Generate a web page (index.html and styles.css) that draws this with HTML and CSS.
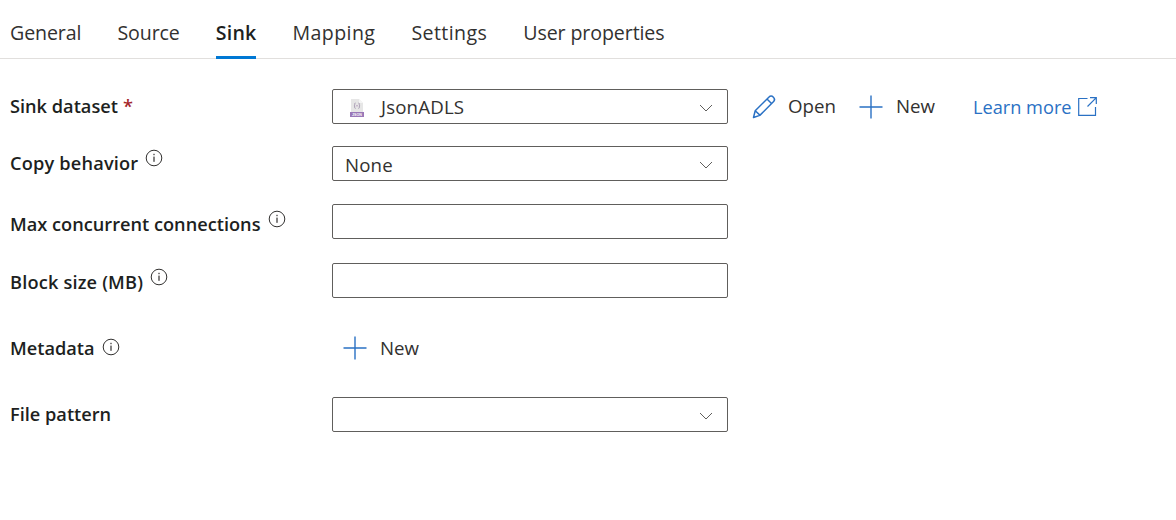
FILE: index.html
```html
<!DOCTYPE html>
<html lang="en">
<head>
<meta charset="utf-8">
<title>Sink</title>
<link rel="stylesheet" href="styles.css">
</head>
<body>
<nav class="tabs">
  <a class="tab">General</a>
  <a class="tab">Source</a>
  <a class="tab active">Sink</a>
  <a class="tab wide">Mapping</a>
  <a class="tab wide">Settings</a>
  <a class="tab">User properties</a>
</nav>
<main class="form">
  <div class="row row-dataset">
    <div class="label"><span>Sink dataset</span> <span class="req">*</span></div>
    <div class="field select">
      <svg class="json" viewBox="0 0 14 18" width="14" height="18"><path d="M1 0h8l4 4v9H1z" fill="#e6e6e6"/><path d="M9 0l4 4H9z" fill="#f5f5f5"/><rect x="0" y="13" width="14" height="5" fill="#9a78b8"/><path d="M5.500 4c-1 0-.8 1-.8 1.700s-.5 1-.7 1c.2 0 .7.300.7 1s-.2 1.700.8 1.700M8.500 4c1 0 .8 1 .8 1.700s.5 1 .7 1c-.2 0-.7.300-.7 1s.2 1.700-.8 1.700" fill="none" stroke="#8d7a9c" stroke-width=".7"/><rect x="6.500" y="6.300" width="1" height="1" fill="#8d5a9c"/><text x="7" y="17" text-anchor="middle" class="json-text">JSON</text></svg>
      <span class="value">JsonADLS</span>
      <svg class="chev" viewBox="0 0 14 8" width="14" height="8"><path d="M1 1l6 6 6-6" fill="none" stroke="#605e5c" stroke-width="1"/></svg>
    </div>
    <div class="actions">
      <button class="cmd cmd-open">
        <svg width="26" height="26" viewBox="0 0 26 26"><path d="M2.500 23.500l1.700-6.700L17.800 3.200c1.300-1.300 3.300-1.300 4.600 0s1.300 3.300 0 4.600L8.800 21.400zM4.200 16.800l5 4.600M16 5l5 5" fill="none" stroke="#2a71c4" stroke-width="1.500" stroke-linejoin="round"/></svg>
        <span>Open</span>
      </button>
      <button class="cmd cmd-new">
        <svg width="24" height="24" viewBox="0 0 24 24"><path d="M12 0.500v23M0.500 12h23" fill="none" stroke="#2a71c4" stroke-width="1.400"/></svg>
        <span>New</span>
      </button>
      <a class="learn">Learn more
        <svg width="19" height="19" viewBox="0 0 19 19"><path d="M9.500 1.500H.7v16.800h16.800V10M12 .7h6.300V7M18.300 .7L9.500 9.500" fill="none" stroke="#2a71c4" stroke-width="1.200"/></svg>
      </a>
    </div>
  </div>
  <div class="row row-copy">
    <div class="label tracked"><span>Copy behavior</span><svg class="info" viewBox="0 0 18 18"><circle cx="9" cy="9" r="7.800" fill="none" stroke="#323130" stroke-width="1"/><rect x="8.400" y="7.600" width="1.200" height="5.200" fill="#323130"/><rect x="8.400" y="4.800" width="1.200" height="1.400" fill="#323130"/></svg></div>
    <div class="field select">
      <span class="value plain">None</span>
      <svg class="chev" viewBox="0 0 14 8" width="14" height="8"><path d="M1 1l6 6 6-6" fill="none" stroke="#605e5c" stroke-width="1"/></svg>
    </div>
  </div>
  <div class="row row-max">
    <div class="label low"><span>Max concurrent connections</span><svg class="info" viewBox="0 0 18 18"><circle cx="9" cy="9" r="7.800" fill="none" stroke="#323130" stroke-width="1"/><rect x="8.400" y="7.600" width="1.200" height="5.200" fill="#323130"/><rect x="8.400" y="4.800" width="1.200" height="1.400" fill="#323130"/></svg></div>
    <div class="field"></div>
  </div>
  <div class="row row-block">
    <div class="label lowish tracked"><span>Block size (MB)</span><svg class="info" viewBox="0 0 18 18"><circle cx="9" cy="9" r="7.800" fill="none" stroke="#323130" stroke-width="1"/><rect x="8.400" y="7.600" width="1.200" height="5.200" fill="#323130"/><rect x="8.400" y="4.800" width="1.200" height="1.400" fill="#323130"/></svg></div>
    <div class="field"></div>
  </div>
  <div class="row row-meta">
    <div class="label level"><span>Metadata</span><svg class="info info-level" viewBox="0 0 18 18"><circle cx="9" cy="9" r="7.800" fill="none" stroke="#323130" stroke-width="1"/><rect x="8.400" y="7.600" width="1.200" height="5.200" fill="#323130"/><rect x="8.400" y="4.800" width="1.200" height="1.400" fill="#323130"/></svg></div>
    <button class="cmd cmd-meta">
      <svg width="24" height="24" viewBox="0 0 24 24"><path d="M12 0.500v23M0.500 12h23" fill="none" stroke="#2a71c4" stroke-width="1.400"/></svg>
      <span>New</span>
    </button>
  </div>
  <div class="row row-file">
    <div class="label"><span>File pattern</span></div>
    <div class="field select">
      <svg class="chev" viewBox="0 0 14 8" width="14" height="8"><path d="M1 1l6 6 6-6" fill="none" stroke="#605e5c" stroke-width="1"/></svg>
    </div>
  </div>
</main>
</body>
</html>
```
FILE: styles.css
```css
* { box-sizing: border-box; }
html, body { margin: 0; padding: 0; background: #fff; }
body {
  width: 1176px;
  height: 520px;
  overflow: hidden;
  font-family: "Open Sans", "Noto Sans", "Liberation Sans", sans-serif;
  color: #201f1e;
}
.tabs {
  display: flex;
  gap: 36px;
  height: 59px;
  padding-left: 10px;
  border-bottom: 1px solid #e1dfdd;
}
.tab {
  height: 59px;
  padding-top: 19px;
  font-size: 19.600px;
  line-height: 28px;
  letter-spacing: -0.1px;
  color: #323130;
}
.tab.wide { letter-spacing: 0.400px; }
.tab.active {
  font-weight: 600;
  color: #201f1e;
  letter-spacing: 0.200px;
  border-bottom: 3px solid #0078d4;
}
.form { padding: 30px 0 0 10px; }
.row { display: flex; align-items: center; height: 35px; }
.row-copy { margin-top: 22px; }
.row-max { margin-top: 23px; }
.row-block { margin-top: 24px; }
.row-meta { margin-top: 32px; }
.row-file { margin-top: 32px; }
.label {
  display: flex;
  align-items: center;
  width: 322px;
  flex: none;
  padding-bottom: 2px;
  font-size: 18.200px;
  font-weight: 600;
  line-height: 24px;
  color: #201f1e;
  letter-spacing: 0;
}
.label.tracked { letter-spacing: 0.180px; }
.label.low { padding: 4px 0 0; }
.label.lowish { padding: 3px 0 0; }
.label.level { padding: 0; }
.req { color: #a4262c; margin-left: 5px; }
.info { width: 18px; height: 18px; margin: -10px 0 0 7px; flex: none; }
.info-level { margin-top: -2px; }
.field {
  width: 396px;
  height: 35px;
  flex: none;
  display: flex;
  align-items: center;
  border: 1px solid #605e5c;
  border-radius: 2px;
  background: #fff;
}
.select { position: relative; }
.chev { position: absolute; right: 14px; top: 14px; }
.json { margin: 2px 0 0 17px; flex: none; }
.json-text { font-size: 3.600px; font-weight: 700; fill: #ffffff; font-family: "Liberation Sans", sans-serif; }
.value { font-size: 18.700px; letter-spacing: 0.150px; color: #323130; margin-left: 17px; }
.value.plain { margin-left: 12px; padding-top: 2px; }
.actions { display: flex; align-items: center; margin-left: 23px; }
.cmd {
  display: flex;
  align-items: center;
  padding: 0;
  border: 0;
  background: none;
  font: inherit;
  font-size: 18.700px;
  letter-spacing: 0;
  color: #323130;
}
.cmd-open span, .cmd-new span { margin-bottom: 2px; }
.cmd-open span { margin-left: 11px; }
.cmd-new { margin-left: 23px; }
.cmd-new span { margin-left: 13px; }
.cmd-meta { margin-left: 11px; }
.cmd-meta span { margin-left: 13px; }
.learn {
  display: flex;
  align-items: center;
  gap: 6px;
  margin-left: 38px;
  font-size: 18.200px;
  letter-spacing: 0;
  color: #2a71c4;
}
```
